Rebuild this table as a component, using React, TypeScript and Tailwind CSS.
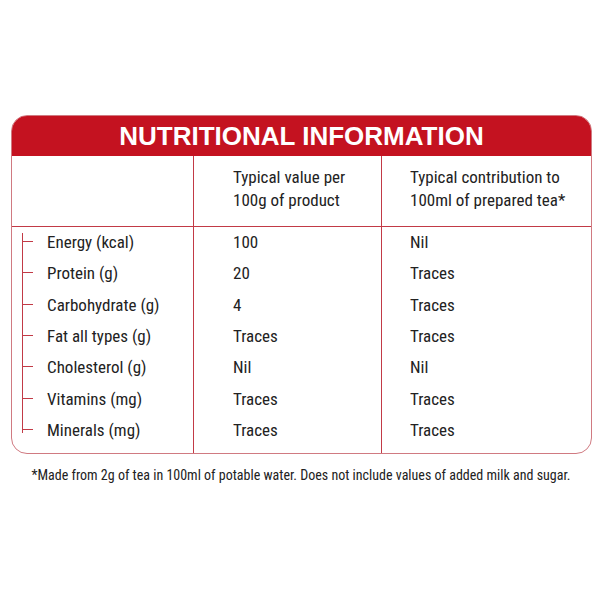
const rows = [
  { label: "Energy (kcal)", per100g: "100", perCup: "Nil" },
  { label: "Protein (g)", per100g: "20", perCup: "Traces" },
  { label: "Carbohydrate (g)", per100g: "4", perCup: "Traces" },
  { label: "Fat all types (g)", per100g: "Traces", perCup: "Traces" },
  { label: "Cholesterol (g)", per100g: "Nil", perCup: "Nil" },
  { label: "Vitamins (mg)", per100g: "Traces", perCup: "Traces" },
  { label: "Minerals (mg)", per100g: "Traces", perCup: "Traces" },
]

const narrow = {
  fontFamily: '"Liberation Sans Narrow", "Roboto Condensed", "DejaVu Sans Condensed", "Arial Narrow", sans-serif',
  fontStretch: "condensed",
}

export default function App() {
  return (
    <div className="w-[600px] h-[600px] bg-white pt-[115px] text-[#222]" style={narrow}>
      <div className="ml-[11px] w-[581px] rounded-[16px] border border-[#d07a81] overflow-hidden">
        {/* title band */}
        <div className="h-[40px] bg-[#c41220] flex items-center justify-center">
          <h1
            className="text-white text-[26px] font-bold leading-none"
            style={{ fontFamily: '"Liberation Sans", Arial, sans-serif', fontStretch: "normal" }}
          >
            NUTRITIONAL INFORMATION
          </h1>
        </div>

        {/* column headings */}
        <div className="grid grid-cols-[181px_188px_1fr] h-[71px] border-b border-[#c23a46] text-[17px] leading-[23px]">
          <div />
          <div className="border-l border-[#c23a46] pl-[39px] pt-[10px]">
            Typical value per
            <br />
            100g of product
          </div>
          <div className="border-l border-[#c23a46] pl-[28px] pt-[10px]">
            Typical contribution to
            <br />
            100ml of prepared tea*
          </div>
        </div>

        {/* values */}
        <div className="grid grid-cols-[181px_188px_1fr] h-[226px] text-[17px]">
          <div className="flex items-start pl-[10px]">
            <div className="mt-[6px] border-l border-[#c23a46] flex flex-col pt-[8px] pb-[3px] gap-[30.33px]">
              {rows.map((r) => (
                <div key={r.label} className="w-[10px] h-px bg-[#c23a46]" />
              ))}
            </div>
            <div className="flex flex-col pl-[14px]">
              {rows.map((r) => (
                <div key={r.label} className="h-[31.33px] flex items-center whitespace-nowrap">
                  {r.label}
                </div>
              ))}
            </div>
          </div>
          <div className="border-l border-[#c23a46] pl-[39px] flex flex-col">
            {rows.map((r) => (
              <div key={r.label} className="h-[31.33px] flex items-center">
                {r.per100g}
              </div>
            ))}
          </div>
          <div className="border-l border-[#c23a46] pl-[28px] flex flex-col">
            {rows.map((r) => (
              <div key={r.label} className="h-[31.33px] flex items-center">
                {r.perCup}
              </div>
            ))}
          </div>
        </div>
      </div>

      <p className="mt-[14px] text-center text-[14px] leading-none pl-[2px]">
        *Made from 2g of tea in 100ml of potable water. Does not include values of added milk and sugar.
      </p>
    </div>
  )
}
